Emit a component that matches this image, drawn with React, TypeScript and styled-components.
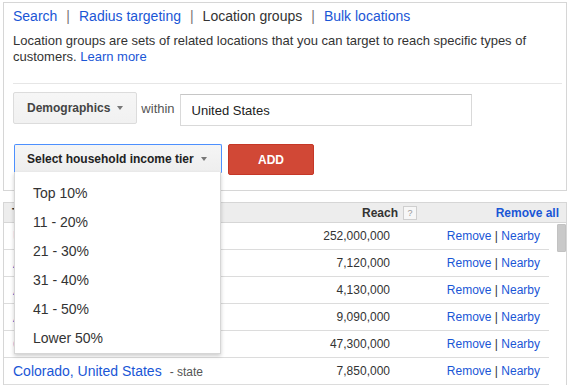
import React from "react";
import styled, { createGlobalStyle } from "styled-components";

const Global = createGlobalStyle`
  html, body { margin: 0; padding: 0; overflow: hidden; background: #fff; }
  body { font-family: "Liberation Sans", Arial, Helvetica, sans-serif; color: #333; }
  * { box-sizing: border-box; }
`;

const Page = styled.div`
  width: 571px;
  height: 388px;
  padding: 2px 0 0 3px;
`;

const Panel = styled.section`
  width: 564px;
  border: 1px solid #d6d6d6;
  padding: 5px 4px 15px 9px;
`;

const Nav = styled.nav`
  display: flex;
  align-items: center;
  font-size: 14px;
  line-height: 16px;
  height: 16px;
`;

const Link = styled.a<{ $bold?: boolean }>`
  color: #1a56d6;
  text-decoration: none;
  cursor: pointer;
  font-weight: ${(p) => (p.$bold ? "bold" : "normal")};
`;

const Current = styled.span`
  color: #333;
`;

const Sep = styled.span`
  color: #777;
  margin: 0 9px;
`;

const Description = styled.p`
  margin: 9px 0 0;
  font-size: 13px;
  line-height: 16px;
  color: #333;
`;

const Divider = styled.hr`
  border: 0;
  border-top: 1px solid #e6e6e6;
  margin: 18px 0 0;
  height: 0;
`;

const ControlRow = styled.div<{ $top: number }>`
  display: flex;
  align-items: flex-start;
  margin-top: ${(p) => p.$top}px;
`;

const Caret = styled.span`
  display: inline-block;
  width: 0;
  height: 0;
  border-left: 3.5px solid transparent;
  border-right: 3.5px solid transparent;
  border-top: 4px solid #777;
  margin-left: 7px;
`;

const DropButton = styled.button`
  display: flex;
  align-items: center;
  height: 32px;
  padding: 0 13px;
  background: linear-gradient(#f6f6f6, #f1f1f1);
  border: 1px solid #dcdcdc;
  border-radius: 2px;
  font-family: inherit;
  font-weight: bold;
  font-size: 12px;
  color: #444;
`;

const Within = styled.span`
  font-size: 13px;
  color: #555;
  margin: 9px 5px 0 4px;
`;

const LocationInput = styled.input`
  width: 292px;
  height: 32px;
  margin-top: 2px;
  border: 1px solid #d9d9d9;
  border-top-color: #c6c6c6;
  padding: 0 11px;
  font-family: inherit;
  font-size: 13px;
  color: #222;
  outline: none;
`;

const SelectWrap = styled.div`
  position: relative;
  z-index: 10;
`;

const SelectButton = styled.button`
  display: flex;
  align-items: center;
  width: 208px;
  height: 29px;
  padding: 0 12px;
  margin-left: 1px;
  background: linear-gradient(#f5f5f5, #eeeeee);
  border: 1px solid #4d90fe;
  border-bottom-color: #d0d0d0;
  border-radius: 2px 2px 0 0;
  font-family: inherit;
  font-weight: bold;
  font-size: 12px;
  color: #222;
`;

const Menu = styled.ul`
  position: absolute;
  left: 1px;
  top: 28px;
  width: 207px;
  margin: 0;
  padding: 7px 0 0;
  list-style: none;
  background: #fff;
  border: 1px solid rgba(0, 0, 0, 0.16);
  border-top: 0;
  box-shadow: 0 2px 4px rgba(0, 0, 0, 0.2);
`;

const MenuItem = styled.li`
  height: 29px;
  line-height: 29px;
  padding-left: 18px;
  font-size: 14px;
  color: #333;
`;

const AddButton = styled.button`
  width: 86px;
  height: 31px;
  margin-left: 6px;
  background: #d14836;
  border: 1px solid #c53727;
  border-radius: 2px;
  color: #fff;
  font-family: inherit;
  font-weight: bold;
  font-size: 12px;
`;

const Table = styled.div`
  width: 564px;
  margin-top: 11px;
  border: 1px solid #d6d6d6;
  border-bottom: 0;
`;

const HeaderRow = styled.div`
  display: grid;
  grid-template-columns: 1fr 150px 142px;
  align-items: center;
  height: 20px;
  padding: 0 7px 0 8px;
  background: #ededed;
  border-bottom: 1px solid #d6d6d6;
  font-size: 12px;
  font-weight: bold;
  color: #333;
`;

const HeadCell = styled.div<{ $align?: string }>`
  display: flex;
  align-items: center;
  justify-content: ${(p) => p.$align || "flex-start"};
`;

const Help = styled.span`
  display: inline-flex;
  align-items: center;
  justify-content: center;
  width: 14px;
  height: 14px;
  margin-left: 5px;
  border: 1px solid #cfcfcf;
  background: #f7f7f7;
  color: #999;
  font-size: 9px;
  font-weight: normal;
`;

const Body = styled.div`
  display: flex;
`;

const Rows = styled.div`
  width: 545px;
`;

const Row = styled.div`
  display: grid;
  grid-template-columns: 1fr 120px 159px;
  align-items: center;
  height: 27px;
  padding-left: 9px;
  border-bottom: 1px solid #dcdcdc;
`;

const NameCell = styled.div`
  display: flex;
  align-items: baseline;
  font-size: 14px;
  white-space: nowrap;
`;

const TypeLabel = styled.span`
  margin-left: 8px;
  font-size: 12px;
  color: #555;
`;

const Reach = styled.div`
  text-align: right;
  font-size: 12px;
  color: #333;
`;

const Actions = styled.div`
  text-align: right;
  padding-right: 9px;
  font-size: 12px;
  color: #333;
`;

const ScrollTrack = styled.div`
  width: 17px;
  padding: 1px 0 0 8px;
`;

const ScrollThumb = styled.div`
  width: 9px;
  height: 28px;
  background: #c9c9c9;
  border: 1px solid #c2c2c2;
  border-radius: 1px;
`;

const tiers = ["Top 10%", "11 - 20%", "21 - 30%", "31 - 40%", "41 - 50%", "Lower 50%"];

const locations = [
  { name: "United States", type: "country", reach: "252,000,000" },
  { name: "Alabama, United States", type: "state", reach: "7,120,000" },
  { name: "Arkansas, United States", type: "state", reach: "4,130,000" },
  { name: "Arizona, United States", type: "state", reach: "9,090,000" },
  { name: "California, United States", type: "state", reach: "47,300,000" },
  { name: "Colorado, United States", type: "state", reach: "7,850,000" },
];

export default function App() {
  return (
    <>
      <Global />
      <Page>
        <Panel>
          <Nav>
            <Link>Search</Link>
            <Sep>|</Sep>
            <Link>Radius targeting</Link>
            <Sep>|</Sep>
            <Current>Location groups</Current>
            <Sep>|</Sep>
            <Link>Bulk locations</Link>
          </Nav>
          <Description>
            Location groups are sets of related locations that you can target to reach specific types of
            customers. <Link>Learn more</Link>
          </Description>
          <Divider />
          <ControlRow $top={8}>
            <DropButton>
              Demographics
              <Caret />
            </DropButton>
            <Within>within</Within>
            <LocationInput defaultValue="United States" />
          </ControlRow>
          <ControlRow $top={18}>
            <SelectWrap>
              <SelectButton>
                Select household income tier
                <Caret />
              </SelectButton>
              <Menu>
                {tiers.map((t) => (
                  <MenuItem key={t}>{t}</MenuItem>
                ))}
              </Menu>
            </SelectWrap>
            <AddButton>ADD</AddButton>
          </ControlRow>
        </Panel>
        <Table>
          <HeaderRow>
            <HeadCell>Targeted locations</HeadCell>
            <HeadCell $align="flex-end">
              Reach
              <Help>?</Help>
            </HeadCell>
            <HeadCell $align="flex-end">
              <Link $bold>Remove all</Link>
            </HeadCell>
          </HeaderRow>
          <Body>
            <Rows>
              {locations.map((l) => (
                <Row key={l.name}>
                  <NameCell>
                    <Link>{l.name}</Link>
                    <TypeLabel>- {l.type}</TypeLabel>
                  </NameCell>
                  <Reach>{l.reach}</Reach>
                  <Actions>
                    <Link>Remove</Link> | <Link>Nearby</Link>
                  </Actions>
                </Row>
              ))}
            </Rows>
            <ScrollTrack>
              <ScrollThumb />
            </ScrollTrack>
          </Body>
        </Table>
      </Page>
    </>
  );
}
